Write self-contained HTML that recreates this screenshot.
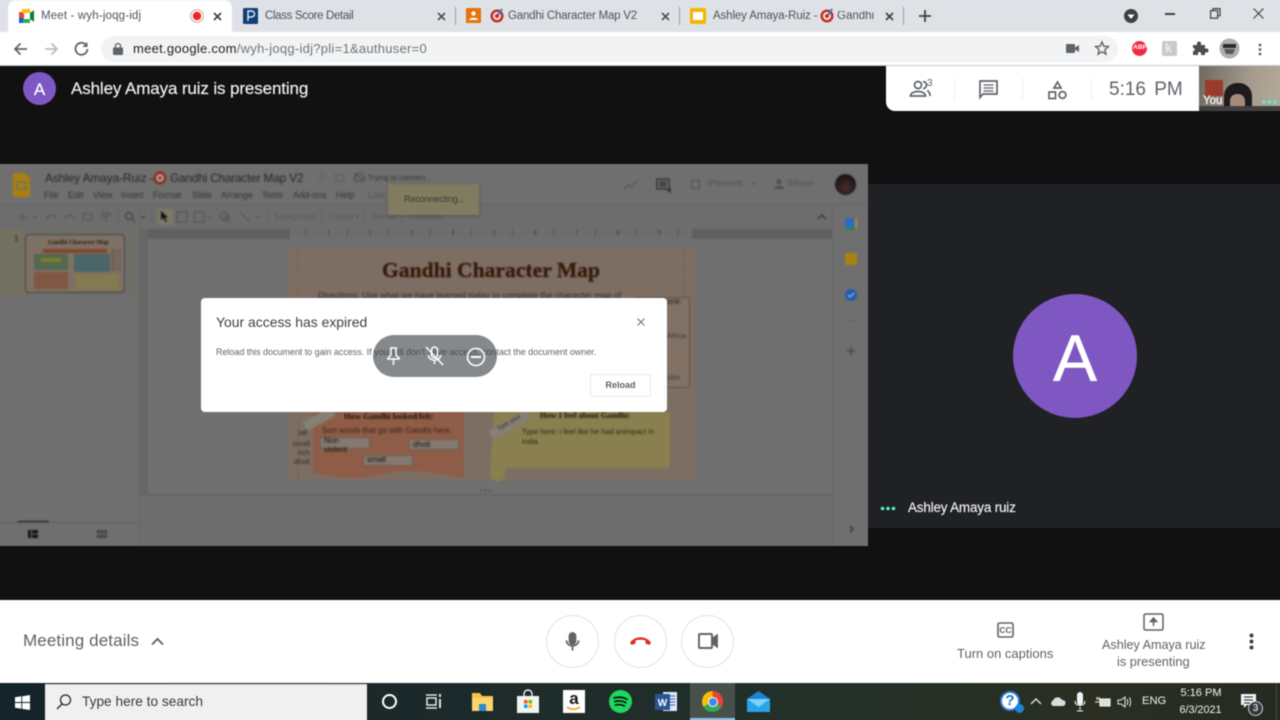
<!DOCTYPE html>
<html><head><meta charset="utf-8"><title>Meet - wyh-joqg-idj</title>
<style>
*{box-sizing:border-box}
html,body{margin:0;padding:0;width:1280px;height:720px;max-height:720px;overflow:hidden;background:#111;font-family:"Liberation Sans",sans-serif}
.a{position:absolute}
.t{position:absolute;white-space:nowrap;line-height:1}
svg{position:absolute;overflow:visible}
</style></head><body>
<div style="position:absolute;left:0;top:0;width:1280px;height:720px;overflow:hidden;contain:strict">
<div class="a" style="left:0;top:0;width:1280px;height:720px;filter:blur(.45px)">

<!-- Chrome -->
<div class="a" style="left:-10px;top:-10px;width:1300px;height:42px;background:#dee1e6"></div>
<div class="a" style="left:8px;top:0;width:224px;height:33px;background:#fff;border-radius:8px 8px 0 0"></div>
<div class="a" style="left:-10px;top:32px;width:1300px;height:33px;background:#fff"></div>
<div class="a" style="left:-10px;top:65px;width:1300px;height:1px;background:#c4c6c9"></div>
<svg style="left:19px;top:9px" width="16" height="14" viewBox="0 0 16 14"><rect x="0" y="3" width="5" height="8" fill="#ea4335"/><rect x="3" y="0" width="8" height="4" fill="#fbbc04"/><rect x="3" y="10" width="8" height="4" fill="#34a853"/><rect x="5" y="4" width="6" height="6" fill="#fff"/><path d="M11 4l4-3v12l-4-3z" fill="#00832d"/><rect x="0" y="9" width="4" height="5" fill="#0066da"/></svg>
<div class="t" style="left:41px;top:11px;font-size:11.500px;color:#50545a;letter-spacing:.16px">Meet - wyh-joqg-idj</div>
<svg style="left:190px;top:9px" width="14" height="14"><circle cx="7" cy="7" r="6.300" fill="none" stroke="#e8a7a3" stroke-width="1.200"/><circle cx="7" cy="7" r="4.200" fill="#e52b20"/></svg>
<svg style="left:213px;top:12px" width="9" height="9"><path d="M1 1l7 7M8 1l-7 7" stroke="#3c4043" stroke-width="1.700"/></svg>

<svg style="left:243px;top:8px" width="15" height="16"><rect width="15" height="16" rx="1" fill="#123f78"/><path d="M5 13V3h3.500a3 3 0 0 1 0 6H5" fill="none" stroke="#dfe8f2" stroke-width="1.400"/></svg>
<div class="t" style="left:265px;top:11px;font-size:11.500px;color:#50545a;letter-spacing:-.35px">Class Score Detail</div>
<svg style="left:437px;top:12px" width="9" height="9"><path d="M1 1l7 7M8 1l-7 7" stroke="#4d5054" stroke-width="1.600"/></svg>
<div class="a" style="left:455px;top:7px;width:1px;height:18px;background:#9da0a5"></div>
<svg style="left:466px;top:8px" width="15" height="15"><rect width="15" height="15" rx="1" fill="#e8710a"/><circle cx="7.500" cy="5.500" r="2.200" fill="#fff"/><path d="M3 12c0-3 9-3 9 0z" fill="#fff"/></svg>
<svg style="left:490px;top:8px" width="14" height="15"><circle cx="7" cy="8" r="6.500" fill="#c62c22"/><circle cx="7" cy="8" r="4" fill="#f2e9df"/><circle cx="7" cy="8" r="2" fill="#c62c22"/><path d="M8 7l4-6" stroke="#2b79c9" stroke-width="2"/></svg>
<div class="t" style="left:508px;top:11px;font-size:11.500px;color:#50545a;letter-spacing:-.2px">Gandhi Character Map V2</div>
<svg style="left:661px;top:12px" width="9" height="9"><path d="M1 1l7 7M8 1l-7 7" stroke="#4d5054" stroke-width="1.600"/></svg>
<div class="a" style="left:679px;top:7px;width:1px;height:18px;background:#9da0a5"></div>
<svg style="left:690px;top:8px" width="16" height="16"><rect width="16" height="16" rx="2" fill="#f4b400"/><rect x="3" y="4" width="10" height="8" fill="#fff"/></svg>
<div class="t" style="left:713px;top:11px;font-size:11.500px;color:#50545a;letter-spacing:-.12px">Ashley Amaya-Ruiz -</div>
<svg style="left:820px;top:8px" width="14" height="15"><circle cx="7" cy="8" r="6.500" fill="#c62c22"/><circle cx="7" cy="8" r="4" fill="#f2e9df"/><circle cx="7" cy="8" r="2" fill="#c62c22"/><path d="M8 7l4-6" stroke="#2b79c9" stroke-width="2"/></svg>
<div class="t" style="left:837px;top:11px;width:38px;overflow:hidden;font-size:11.500px;color:#50545a">Gandhi</div>
<svg style="left:885px;top:12px" width="9" height="9"><path d="M1 1l7 7M8 1l-7 7" stroke="#3c4043" stroke-width="1.700"/></svg>
<div class="a" style="left:903px;top:7px;width:1px;height:18px;background:#9da0a5"></div>
<svg style="left:919px;top:10px" width="12" height="12"><path d="M6 0v12M0 6h12" stroke="#3c4043" stroke-width="1.800"/></svg>
<svg style="left:1124px;top:9px" width="14" height="14"><circle cx="7" cy="7" r="7" fill="#3c4043"/><path d="M3.500 5.500h7L7 10z" fill="#fff"/></svg>
<div class="a" style="left:1165px;top:13px;width:10px;height:1.500px;background:#3c4043"></div>
<svg style="left:1210px;top:8px" width="11" height="11" fill="none" stroke="#3c4043" stroke-width="1.200"><rect x=".6" y="2.600" width="7" height="7.600"/><path d="M3 2.400V.6h7v7.200H8"/></svg>
<svg style="left:1253px;top:8px" width="11" height="11"><path d="M.5.500l10 10M10.500.500l-10 10" stroke="#3c4043" stroke-width="1.100"/></svg>

<!-- toolbar -->
<svg style="left:13px;top:42px" width="15" height="14" fill="none" stroke="#5f6368" stroke-width="1.800"><path d="M14 7H2M7.500 1.500L2 7l5.500 5.500"/></svg>
<svg style="left:44px;top:42px" width="15" height="14" fill="none" stroke="#b9bcc0" stroke-width="1.800"><path d="M1 7h12M7.500 1.500L13 7l-5.500 5.500"/></svg>
<svg style="left:74px;top:41px" width="15" height="15" fill="none" stroke="#5f6368" stroke-width="1.800"><path d="M12.500 4.500A6 6 0 1 0 13.500 8"/><path d="M13.500 1v5h-5" fill="#5f6368" stroke="none"/></svg>
<div class="a" style="left:101px;top:36px;width:1017px;height:26px;border-radius:13px;background:#f1f3f4"></div>
<svg style="left:113px;top:43px" width="10" height="12"><rect y="4.500" width="10" height="7.500" rx="1" fill="#5f6368"/><path d="M2.500 5V3a2.500 2.500 0 0 1 5 0v2" fill="none" stroke="#5f6368" stroke-width="1.300"/></svg>
<div class="t" style="left:133px;top:42px;font-size:13px;letter-spacing:.27px;color:#70757a"><span style="color:#202124">meet.google.com</span>/wyh-joqg-idj?pli=1&amp;authuser=0</div>
<svg style="left:1066px;top:44px" width="13" height="9"><rect width="9" height="9" rx="1" fill="#5f6368"/><path d="M9 3.500L13 1v7L9 5.500z" fill="#5f6368"/></svg>
<svg style="left:1095px;top:41px" width="14" height="14"><path d="M7 1l1.800 4.200 4.600.4-3.500 3 1 4.500L7 10.700 3.100 13.100l1-4.500-3.500-3 4.600-.4z" fill="none" stroke="#5f6368" stroke-width="1.400"/></svg>
<div class="a" style="left:1132px;top:41px;width:15px;height:15px;border-radius:50%;background:#ef2b45"></div>
<div class="t" style="left:1133px;top:45px;font-size:6.500px;font-weight:bold;color:#fff;width:14px;text-align:center">ABP</div>
<div class="a" style="left:1162px;top:41px;width:15px;height:15px;border-radius:2px;background:#c9cacb"></div>
<div class="t" style="left:1165px;top:42px;font-size:12px;font-weight:bold;color:#eee">k</div>
<svg style="left:1193px;top:41px" width="14" height="14"><path d="M0 4h4V2.500a2 2 0 0 1 4 0V4h4v3.500h1.500a2 2 0 0 1 0 4H12V14H8v-1.500a1.500 1.500 0 0 0-3 0V14H0v-4h1a2 2 0 0 0 0-3H0z" fill="#4a4d51"/></svg>
<svg style="left:1219px;top:38px" width="21" height="21"><circle cx="10.500" cy="10.500" r="10" fill="#aeb0a7"/><rect x="4" y="6" width="13" height="4" fill="#2c2d2e"/><path d="M5 11h11l-2 5H7z" fill="#55575a"/></svg>
<svg style="left:1258px;top:43px" width="4" height="14"><circle cx="2" cy="2" r="1.400" fill="#5f6368"/><circle cx="2" cy="6.500" r="1.400" fill="#5f6368"/><circle cx="2" cy="11" r="1.400" fill="#5f6368"/></svg>

<!-- Meet top -->
<div class="a" style="left:-10px;top:66px;width:1300px;height:534px;background:#111112"></div>
<div class="a" style="left:23px;top:72px;width:33px;height:33px;border-radius:50%;background:#7e57c2"></div>
<div class="t" style="left:23px;top:81px;width:33px;text-align:center;font-size:17px;color:#fff;-webkit-text-stroke:.2px #fff">A</div>
<div class="t" style="left:71px;top:80px;font-size:17px;color:#eceded;-webkit-text-stroke:.2px #eceded;letter-spacing:-.12px">Ashley Amaya ruiz is presenting</div>

<div class="a" style="left:886px;top:66px;width:314px;height:45px;background:#fff;border-radius:0 0 0 9px"></div>
<svg style="left:909px;top:79px" width="25" height="19" fill="none" stroke="#5f6368" stroke-width="1.700"><circle cx="9" cy="6" r="3.500"/><path d="M1.500 17c0-6 15-6 15 0z"/><path d="M14 2.500a3.500 3.500 0 0 1 0 7M18 11.500c2 .8 3 2.500 3 5.500"/></svg>
<div class="t" style="left:927px;top:79px;font-size:10px;color:#5f6368">3</div>
<div class="a" style="left:954px;top:78px;width:1px;height:22px;background:#eceef0"></div>
<svg style="left:979px;top:80px" width="19" height="19" fill="none" stroke="#5f6368" stroke-width="1.700"><path d="M1 1h17v13H4l-3 3.500z"/><path d="M4.500 5h10M4.500 8h10M4.500 11h10" stroke-width="1.300"/></svg>
<div class="a" style="left:1022px;top:78px;width:1px;height:22px;background:#eceef0"></div>
<svg style="left:1048px;top:81px" width="19" height="18" fill="none" stroke="#5f6368" stroke-width="1.700"><path d="M9.500 1l3.500 6H6z"/><rect x="1" y="11" width="6.500" height="6.500"/><circle cx="14.500" cy="14" r="3.400"/></svg>
<div class="a" style="left:1091px;top:78px;width:1px;height:22px;background:#eceef0"></div>
<div class="t" style="left:1109px;top:80px;font-size:19px;color:#5f6368;word-spacing:3px">5:16 PM</div>

<div class="a" style="left:1199px;top:66px;width:91px;height:45px;overflow:hidden;background:#8a8377">
  <div class="a" style="left:0;top:0;width:91px;height:45px;background:linear-gradient(100deg,#6f6860,#a59c8e 55%,#b7ae9f)"></div>
  <div class="a" style="left:6px;top:14px;width:18px;height:16px;background:#9a3a2a"></div>
  <div class="a" style="left:25px;top:17px;width:28px;height:40px;border-radius:13px 13px 0 0;background:#1e1b1d"></div>
  <div class="a" style="left:31px;top:28px;width:15px;height:20px;border-radius:7px;background:#a98a78"></div>
  <div class="a" style="left:0;top:40px;width:91px;height:5px;background:#423f41"></div>
</div>
<div class="t" style="left:1203px;top:96px;font-size:11.500px;color:#fff;-webkit-text-stroke:.2px #fff">You</div>
<svg style="left:1262px;top:100px" width="16" height="4"><circle cx="2" cy="2" r="1.700" fill="#5eecd0"/><circle cx="7.500" cy="2" r="1.700" fill="#5eecd0"/><circle cx="13" cy="2" r="1.700" fill="#5eecd0"/></svg>

<!-- Tile right -->
<div class="a" style="left:868px;top:184px;width:422px;height:344px;background:#202124"></div>
<div class="a" style="left:1013px;top:294px;width:124px;height:124px;border-radius:50%;background:#7e57c2"></div>
<div class="t" style="left:1013px;top:325px;width:124px;text-align:center;font-size:66px;color:#fff;-webkit-text-stroke:.4px #fff">A</div>
<svg style="left:880px;top:506px" width="16" height="5"><circle cx="2.500" cy="2.500" r="1.800" fill="#5eecd0"/><circle cx="8" cy="2.500" r="1.800" fill="#5eecd0"/><circle cx="13.500" cy="2.500" r="1.800" fill="#5eecd0"/></svg>
<div class="t" style="left:908px;top:501px;font-size:13.500px;color:#f1f3f4;-webkit-text-stroke:.15px #f1f3f4;letter-spacing:-.2px">Ashley Amaya ruiz</div>

<!-- Slides app (dimmed) -->
<div class="a" style="left:-10px;top:164px;width:12px;height:382px;background:#6f6f70"></div>
<div class="a" style="left:0;top:164px;width:868px;height:382px;background:#707071;overflow:hidden">
  <div style="position:absolute;left:-10px;top:-10px;width:888px;height:402px;filter:blur(.7px)">
  <div style="position:absolute;left:10px;top:10px;width:868px;height:382px">
  <div class="a" style="left:-10px;top:-10px;width:888px;height:50px;background:#6f6f70"></div>
  <div class="a" style="left:0;top:40px;width:868px;height:1px;background:#656566"></div>
  <div class="a" style="left:0;top:41px;width:832px;height:24px;background:#6d6d6e"></div>
  <svg style="left:13px;top:9px" width="17" height="24"><path d="M0 2a2 2 0 0 1 2-2h10l5 5v17a2 2 0 0 1-2 2H2a2 2 0 0 1-2-2z" fill="#a97f0f"/><rect x="4" y="9" width="9" height="7" fill="none" stroke="#6f6f70" stroke-width="1.500"/></svg>
  <div class="t" style="left:45px;top:9px;font-size:11.800px;color:#252525;letter-spacing:-.05px">Ashley Amaya-Ruiz -</div>
  <svg style="left:153px;top:7px" width="14" height="14"><circle cx="7" cy="7" r="6.500" fill="#8c2b20"/><circle cx="7" cy="7" r="3.800" fill="#bfb2a6"/><circle cx="7" cy="7" r="1.800" fill="#8c2b20"/></svg>
  <div class="t" style="left:170px;top:9px;font-size:11.800px;color:#252525;letter-spacing:-.16px">Gandhi Character Map V2</div>
  <div class="t" style="left:316px;top:8px;font-size:11px;color:#5a5a5b">☆</div>
  <div class="a" style="left:335px;top:10px;width:9px;height:8px;border:1px solid #5a5a5b"></div>
  <svg style="left:353px;top:8px" width="12" height="10" fill="none" stroke="#454546"><path d="M3 9h7a2 2 0 0 0 0-4 3.500 3.500 0 0 0-7-.500A2.300 2.300 0 0 0 3 9zM1 1l10 8"/></svg>
  <div class="t" style="left:368px;top:10px;font-size:7.500px;color:#303031">Trying to connect...</div>
  <div class="t" style="left:44px;top:27px;font-size:9px;color:#343435">File</div>
  <div class="t" style="left:68px;top:27px;font-size:9px;color:#343435">Edit</div>
  <div class="t" style="left:93px;top:27px;font-size:9px;color:#343435">View</div>
  <div class="t" style="left:121px;top:27px;font-size:9px;color:#343435">Insert</div>
  <div class="t" style="left:153px;top:27px;font-size:9px;color:#343435">Format</div>
  <div class="t" style="left:192px;top:27px;font-size:9px;color:#343435">Slide</div>
  <div class="t" style="left:221px;top:27px;font-size:9px;color:#343435">Arrange</div>
  <div class="t" style="left:262px;top:27px;font-size:9px;color:#343435">Tools</div>
  <div class="t" style="left:293px;top:27px;font-size:9px;color:#343435">Add-ons</div>
  <div class="t" style="left:336px;top:27px;font-size:9px;color:#343435">Help</div>
  <div class="t" style="left:368px;top:27px;font-size:9px;color:#555556">Last</div>
  <!-- toolbar icons -->
  <svg style="left:0;top:46px" width="300" height="14" fill="none" stroke="#565657" stroke-width="1.200"><path d="M18 7h8M22 3v8M33 6l2 2 2-2M47 9c1-5 7-5 9 0M65 9c2-5 8-5 9 0"/><rect x="83" y="4" width="9" height="6"/><path d="M102 3h8v3h-8zM106 6v6"/><circle cx="129" cy="6" r="3.500" stroke="#424243"/><path d="M132 9l3 3M141 6l2 2 2-2" stroke="#424243"/><rect x="177" y="2" width="10" height="10"/><rect x="194" y="2" width="10" height="10"/><path d="M207 6l2 2 2-2"/><circle cx="224" cy="6" r="4"/><rect x="224" y="6" width="5" height="5"/><path d="M240 2l10 10M256 6l2 2 2-2"/></svg>
  <div class="a" style="left:157px;top:45px;width:16px;height:16px;background:#7c7866"></div>
  <svg style="left:161px;top:47px" width="8" height="11"><path d="M0 0l7 6.500H4l2 4-1.500.5-2-4L0 9z" fill="#111"/></svg>
  <div class="a" style="left:117px;top:46px;width:1px;height:14px;background:#626263"></div>
  <div class="a" style="left:151px;top:46px;width:1px;height:14px;background:#626263"></div>
  <div class="a" style="left:267px;top:46px;width:1px;height:14px;background:#626263"></div>
  <div class="a" style="left:321px;top:46px;width:1px;height:14px;background:#626263"></div>
  <div class="a" style="left:364px;top:46px;width:1px;height:14px;background:#626263"></div>
  <div class="a" style="left:401px;top:46px;width:1px;height:14px;background:#626263"></div>
  <div class="t" style="left:274px;top:49px;font-size:8px;color:#5a5a5b">Background</div>
  <div class="t" style="left:329px;top:49px;font-size:8px;color:#5a5a5b">Layout ▾</div>
  <div class="t" style="left:371px;top:49px;font-size:8px;color:#5a5a5b">Theme</div>
  <div class="t" style="left:408px;top:49px;font-size:8px;color:#5a5a5b">Transition</div>
  <svg style="left:817px;top:50px" width="10" height="6"><path d="M1 5l4-4 4 4" fill="none" stroke="#3a3a3b" stroke-width="1.400"/></svg>
  <!-- header right -->
  <svg style="left:624px;top:16px" width="14" height="10" fill="none" stroke="#565657" stroke-width="1.300"><path d="M0 9l4-4 3 2 6-6"/></svg>
  <svg style="left:656px;top:14px" width="14" height="14" fill="none" stroke="#2a2a2b" stroke-width="1.300"><path d="M1 1h12v9.500h1V14l-3-3H1zM3.500 4h7M3.500 6h7M3.500 8h7"/></svg>
  <div class="a" style="left:691px;top:16px;width:9px;height:9px;border:1px solid #4f4f50"></div>
  <div class="t" style="left:708px;top:15px;font-size:9.500px;color:#5a5a5b;font-weight:bold">Present</div>
  <div class="t" style="left:752px;top:17px;font-size:7px;color:#5a5a5b">▾</div>
  <svg style="left:774px;top:15px" width="10" height="10" fill="#4f4f50"><circle cx="5" cy="2.800" r="2.500"/><path d="M0 10c0-4 10-4 10 0z"/></svg>
  <div class="t" style="left:787px;top:15px;font-size:9.500px;color:#5a5a5b;font-weight:bold">Share</div>
  <div class="a" style="left:835px;top:10px;width:21px;height:21px;border-radius:50%;background:radial-gradient(circle at 50% 65%,#4a2c2c,#1b1415 70%)"></div>

  <!-- filmstrip -->
  <div class="a" style="left:-10px;top:65px;width:149px;height:327px;background:#6f6f70"></div>
  <div class="a" style="left:-10px;top:65px;width:35px;height:67px;background:#73715f"></div>
  <div class="a" style="left:25px;top:65px;width:114px;height:67px;background:#6f6f69"></div>
  <div class="a" style="left:139px;top:41px;width:1px;height:351px;background:#636364"></div>
  <div class="a" style="left:140px;top:65px;width:8px;height:265px;background:#666667"></div>
  <div class="t" style="left:14px;top:70px;font-size:8.500px;color:#2a2a2b">1</div>
  <div class="a" style="left:25px;top:70px;width:100px;height:59px;border:1.500px solid #404245;border-radius:4px;background:#7d7064;overflow:hidden">
    <div class="t" style="left:22px;top:5px;font-size:6px;font-family:'Liberation Serif',serif;font-weight:bold;color:#2e1a0e">Gandhi Character Map</div>
    <div class="a" style="left:17px;top:14px;width:64px;height:4px;background:#83452f"></div>
    <div class="a" style="left:8px;top:19px;width:34px;height:16px;border-radius:2px;background:#54684f"></div>
    <div class="a" style="left:15px;top:23px;width:20px;height:4px;background:#7a7f26"></div>
    <div class="a" style="left:48px;top:19px;width:36px;height:18px;border-radius:2px;background:#4a6668"></div>
    <div class="a" style="left:8px;top:37px;width:34px;height:17px;background:#815643"></div>
    <div class="a" style="left:50px;top:39px;width:43px;height:16px;background:#85794f"></div>
    <div class="a" style="left:86px;top:14px;width:10px;height:22px;background:#75685d;border-left:1px solid #5d534c"></div>
  </div>
  <div class="a" style="left:18px;top:357px;width:31px;height:2px;background:#111"></div>
  <div class="a" style="left:0;top:358px;width:139px;height:1px;background:#5f5f60"></div>
  <svg style="left:28px;top:366px" width="10" height="8" fill="#111"><rect width="3" height="8"/><rect x="4" width="6" height="3.500"/><rect x="4" y="4.500" width="6" height="3.500"/></svg>
  <svg style="left:97px;top:366px" width="10" height="8" fill="#3f3f40"><rect width="2.800" height="3.500"/><rect x="3.600" width="2.800" height="3.500"/><rect x="7.200" width="2.800" height="3.500"/><rect y="4.500" width="2.800" height="3.500"/><rect x="3.600" y="4.500" width="2.800" height="3.500"/><rect x="7.200" y="4.500" width="2.800" height="3.500"/></svg>

  <!-- canvas -->
  <div class="a" style="left:148px;top:65px;width:684px;height:10px;background:#5f6062"></div>
  <div class="a" style="left:290px;top:65px;width:402px;height:10px;background:#6d6e70"></div>
  <div class="t" style="left:287px;top:66px;font-size:7px;color:#3e3e3f;letter-spacing:.1px">· · · · | · · · · 1 · · · | · · · · 2 · · · | · · · · 3 · · · | · · · · 4 · · · | · · · · 5 · · · | · · · · 6 · · · | · · · · 7 · · · | · · · · 8 · · · | · · · · 9 · · · | · · ·</div>
  <div class="a" style="left:140px;top:330px;width:692px;height:1px;background:#616162"></div>
  <div class="a" style="left:140px;top:331px;width:692px;height:61px;background:#6d6d6e"></div>
  <div class="t" style="left:480px;top:324px;font-size:7px;color:#4b4b4c">• • •</div>

  <!-- slide -->
  <div class="a" style="left:287px;top:85px;width:408px;height:232px;background:#7d6e63;overflow:hidden">
    <div class="a" style="left:0;top:0;width:12px;height:232px;border-right:1px dashed #66564c;opacity:.6"></div>
    <div class="a" style="right:0;top:0;width:12px;height:60px;border-left:1px dashed #66564c;opacity:.6"></div>
    <div class="t" style="left:0;top:11px;width:408px;text-align:center;font-family:'Liberation Serif',serif;font-weight:bold;font-size:21.500px;letter-spacing:.05px;color:#351a0a;-webkit-text-stroke:.4px #351a0a">Gandhi Character Map</div>
    <div class="t" style="left:31px;top:42px;font-size:8.600px;color:#332a25;letter-spacing:.1px"><span>Directions:</span> Use what we have learned today to complete the character map of</div>
    <div class="a" style="left:348px;top:48px;width:55px;height:91px;background:#827266;border:1px solid #5e5046"></div>
  </div>
  <div class="t" style="left:667px;top:134px;font-size:8px;color:#2a2420">ank:</div>
  <div class="t" style="left:667px;top:168px;font-size:7.500px;color:#3a3430">Africa</div>
  <div class="t" style="left:667px;top:210px;font-size:7.500px;color:#3a3430">slim</div>
  <!-- lower slide pieces -->
  <svg style="left:313px;top:248px" width="152" height="70"><path d="M0 0H151V66C120 60 95 56 70 62 45 68 20 66 0 60z" fill="#8f5c47"/></svg>
  <svg style="left:490px;top:248px" width="182" height="70"><path d="M4 0H180V52a4 4 0 0 1-4 4H15V62a7 7 0 0 1-15 0z" fill="#8a7f4e"/></svg>
  <div class="t" style="left:344px;top:248px;font-family:'Liberation Serif',serif;font-size:8.500px;font-weight:bold;color:#20120b">How Gandhi looked/felt:</div>
  <div class="t" style="left:540px;top:248px;font-family:'Liberation Serif',serif;font-size:8.300px;font-weight:bold;color:#20120b">How I feel about Gandhi:</div>
  <div class="t" style="left:322px;top:263px;font-size:8px;color:#3a1e13">Sort words that go with Gandhi here.</div>
  <div class="t" style="left:522px;top:264px;font-size:7.500px;color:#2d2712">Type here: i feel like he had animpact in</div>
  <div class="t" style="left:522px;top:274px;font-size:7.500px;color:#2d2712">india</div>
  <div class="a" style="left:320px;top:273px;width:50px;height:12px;background:#85796f;border:1px solid #6c5e54"></div>
  <div class="t" style="left:324px;top:272px;font-size:8px;line-height:9px;color:#111;white-space:normal;width:36px">Non violent</div>
  <div class="a" style="left:409px;top:275px;width:50px;height:11px;background:#85796f;border:1px solid #6c5e54"></div>
  <div class="t" style="left:413px;top:277px;font-size:8px;color:#111">dhoti</div>
  <div class="a" style="left:363px;top:291px;width:50px;height:11px;background:#85796f;border:1px solid #6c5e54"></div>
  <div class="t" style="left:367px;top:292px;font-size:8px;color:#111">small</div>
  <div class="t" style="left:298px;top:265px;font-size:7.500px;color:#2f2a26">tall</div>
  <div class="t" style="left:292px;top:275px;font-size:7.500px;line-height:9px;color:#2f2a26;text-align:right;white-space:normal;width:18px">small rich dhoti</div>
  <div class="a" style="left:303px;top:250px;width:32px;height:10px;background:#857f74;transform:rotate(-28deg)"></div>
  <div class="a" style="left:488px;top:255px;width:44px;height:11px;background:#857f74;transform:rotate(-30deg)"></div>
  <div class="t" style="left:496px;top:256px;font-size:6px;color:#2a2a2a;transform:rotate(-30deg)">Type your</div>

  <!-- right panel -->
  <div class="a" style="left:832px;top:41px;width:46px;height:351px;background:#6f6f70;border-left:1px solid #646465"></div>
  <div class="a" style="left:845px;top:54px;width:12px;height:12px;border-radius:2px;background:#2e6cc0;border-bottom:2px solid #2a8a40;border-right:2px solid #b99115"></div>
  <div class="a" style="left:845px;top:89px;width:12px;height:12px;border-radius:2px;background:#a9830d"></div>
  <div class="a" style="left:845px;top:125px;width:12px;height:12px;border-radius:50%;background:#225aae"></div>
  <svg style="left:847px;top:128px" width="8" height="6"><path d="M1 3l2 2 4-4" fill="none" stroke="#9fb6d8" stroke-width="1.300"/></svg>
  <div class="a" style="left:845px;top:156px;width:12px;height:1px;background:#626263"></div>
  <svg style="left:847px;top:183px" width="8" height="8"><path d="M4 0v8M0 4h8" stroke="#3f3f40" stroke-width="1.200"/></svg>
  <svg style="left:849px;top:361px" width="5" height="8"><path d="M1 1l3 3-3 3" fill="none" stroke="#2f2f30" stroke-width="1.300"/></svg>
  </div>
  </div>
  <div class="a" style="left:388px;top:20px;width:91px;height:31px;background:#7f7c60;box-shadow:0 1px 3px rgba(0,0,0,.25);filter:blur(.4px)"></div>
  <div class="t" style="left:404px;top:31px;font-size:8.800px;color:#3a3a30">Reconnecting...</div>
</div>

<!-- Dialog -->
<div class="a" style="left:201px;top:298px;width:466px;height:114px;background:#fff;border-radius:4px"></div>
<div class="t" style="left:216px;top:316px;font-size:13.900px;color:#3c4043;letter-spacing:.02px">Your access has expired</div>
<svg style="left:637px;top:318px" width="8" height="8"><path d="M.5.500l7 7M7.500.500l-7 7" stroke="#6f7377" stroke-width="1.100"/></svg>
<div class="t" style="left:216px;top:348px;font-size:9px;letter-spacing:-.04px;color:#5f6368">Reload this document to gain access. If you still don't have access, contact the document owner.</div>
<div class="a" style="left:590px;top:374px;width:61px;height:23px;border:1px solid #e8eaed;border-radius:2px;background:#fff"></div>
<div class="t" style="left:590px;top:381px;width:61px;text-align:center;font-size:9px;font-weight:bold;color:#5f6368">Reload</div>

<!-- Pill overlay -->
<div class="a" style="left:373px;top:335px;width:124px;height:42px;border-radius:21px;background:rgba(60,64,67,.62)"></div>
<svg style="left:385px;top:347px" width="17" height="19" fill="none" stroke="#fff" stroke-width="1.500"><path d="M5 1h7M6 1v7l-3 3v1h11v-1l-3-3V1M8.500 12v6"/></svg>
<svg style="left:425px;top:346px" width="19" height="20" fill="none" stroke="#fff" stroke-width="1.500"><rect x="6.500" y="1" width="6" height="11" rx="3"/><path d="M3.500 9c0 7 12 7 12 0M9.500 15v3M1 1l17 18"/></svg>
<svg style="left:466px;top:347px" width="20" height="20" fill="none" stroke="#fff" stroke-width="1.600"><circle cx="10" cy="10" r="8.500"/><path d="M5 10h10" stroke-width="2"/></svg>

<!-- Bottom bar -->
<div class="a" style="left:-10px;top:600px;width:1300px;height:83px;background:#fff"></div>
<div class="t" style="left:23px;top:632px;font-size:17px;color:#5f6368;letter-spacing:.12px">Meeting details</div>
<svg style="left:151px;top:637px" width="13" height="9"><path d="M1 7.500l5.500-5.500L12 7.500" fill="none" stroke="#5f6368" stroke-width="1.900"/></svg>
<div class="a" style="left:546px;top:615px;width:53px;height:53px;border-radius:50%;border:1px solid #e0e2e4"></div>
<div class="a" style="left:614px;top:615px;width:53px;height:53px;border-radius:50%;border:1px solid #e0e2e4"></div>
<div class="a" style="left:681px;top:615px;width:53px;height:53px;border-radius:50%;border:1px solid #e0e2e4"></div>
<svg style="left:565px;top:632px" width="15" height="19" fill="none" stroke="#5f6368" stroke-width="1.800"><rect x="4.500" y="1" width="6" height="11" rx="3" fill="#5f6368"/><path d="M1.500 8.500c0 7 12 7 12 0M7.500 14.500v4"/></svg>
<svg style="left:629px;top:636px" width="23" height="10"><path d="M1 6.500C6-.5 17-.5 22 6.500l-1.500 2.500-4-1.500V4.500c-3-1-7-1-10 0v3l-4 1.500z" fill="#d93025"/></svg>
<svg style="left:698px;top:633px" width="20" height="16" fill="none" stroke="#5f6368" stroke-width="1.900"><rect x="1" y="1" width="13" height="14" rx="1"/><path d="M14 6l5-3.500v11L14 10z" fill="#5f6368"/></svg>

<svg style="left:997px;top:622px" width="17" height="16"><rect x="1" y="1" width="15" height="14" rx="1.500" fill="none" stroke="#5f6368" stroke-width="1.600"/><text x="8.500" y="11" text-anchor="middle" font-size="8.500" font-weight="bold" fill="#5f6368" font-family="Liberation Sans">CC</text></svg>
<div class="t" style="left:957px;top:647px;font-size:13px;color:#5f6368">Turn on captions</div>
<svg style="left:1143px;top:613px" width="21" height="18" fill="none" stroke="#5f6368" stroke-width="1.500"><rect x="1" y="1" width="19" height="16" rx="1.500"/><path d="M10.500 13V8M7.500 8.500l3-3.500 3 3.500z" fill="#5f6368"/></svg>
<div class="t" style="left:1102px;top:639px;font-size:12.600px;color:#5f6368">Ashley Amaya ruiz</div>
<div class="t" style="left:1117px;top:656px;font-size:12.800px;color:#5f6368">is presenting</div>
<svg style="left:1249px;top:633px" width="5" height="17" fill="#3c4043"><circle cx="2.500" cy="2.500" r="2"/><circle cx="2.500" cy="8.500" r="2"/><circle cx="2.500" cy="14.500" r="2"/></svg>

<!-- Taskbar -->
<div class="a" style="left:-10px;top:683px;width:1300px;height:47px;background:linear-gradient(90deg,#14242b 0,#1d2a2b 35%,#22302a 60%,#2a2f22 85%,#262b22 100%)"></div>
<svg style="left:15px;top:695px" width="15" height="15" fill="#fff"><path d="M0 2.200L6.300 1.300V7H0zM7.200 1.200L15 0v7H7.200zM0 8h6.300v5.700L0 12.800zM7.200 8H15v7l-7.800-1.100z"/></svg>
<div class="a" style="left:45px;top:684px;width:322px;height:46px;background:#f0f0f0;border-top:1px solid #d4d4d4"></div>
<svg style="left:56px;top:694px" width="16" height="16" fill="none" stroke="#2a2a2a" stroke-width="1.300"><circle cx="9.500" cy="6" r="5"/><path d="M6 10L1 15"/></svg>
<div class="t" style="left:82px;top:695px;font-size:13.700px;color:#3a3a3a">Type here to search</div>
<div class="a" style="left:382px;top:694px;width:15px;height:15px;border-radius:50%;border:2px solid #fff"></div>
<svg style="left:426px;top:694px" width="17" height="15" fill="none" stroke="#fff" stroke-width="1.300"><path d="M0 1h11M0 14h11"/><rect x="1" y="4" width="9" height="7"/><path d="M14 0v3M14 5v9" stroke-width="1.700"/></svg>
<svg style="left:472px;top:692px" width="21" height="19"><path d="M0 1h8l2 3h11v15H0z" fill="#f6c344"/><rect x="0" y="6" width="21" height="13" fill="#fbd568"/><rect x="7" y="12" width="7" height="7" fill="#2a8bd1"/></svg>
<svg style="left:517px;top:690px" width="22" height="23"><path d="M7 6V4a4 4 0 0 1 8 0v2" fill="none" stroke="#f2f2f2" stroke-width="1.400"/><rect y="6" width="22" height="17" fill="#f3f3f3"/><rect x="7" y="10" width="3.500" height="3.500" fill="#f25022"/><rect x="11.500" y="10" width="3.500" height="3.500" fill="#7fba00"/><rect x="7" y="14.500" width="3.500" height="3.500" fill="#00a4ef"/><rect x="11.500" y="14.500" width="3.500" height="3.500" fill="#ffb900"/></svg>
<div class="a" style="left:563px;top:690px;width:22px;height:23px;background:#fff"></div>
<div class="t" style="left:563px;top:690px;width:22px;text-align:center;font-size:17px;font-weight:bold;color:#1a1a1a">a</div>
<svg style="left:566px;top:706px" width="16" height="5"><path d="M1 1c4 3 9 3 13 0" fill="none" stroke="#f90" stroke-width="1.500"/></svg>
<svg style="left:609px;top:690px" width="23" height="23"><circle cx="11.500" cy="11.500" r="11.500" fill="#1ed760"/><path d="M5 8c4.500-1.300 9-1 13 1.300M5.800 11.500c4-1 7.500-.8 11 1.200M6.500 15c3-.8 6-.6 9 1" fill="none" stroke="#111" stroke-width="1.700" stroke-linecap="round"/></svg>
<svg style="left:655px;top:691px" width="22" height="21"><rect x="8" y="1" width="14" height="19" fill="#dfe7f4"/><path d="M13 5h7M13 8h7M13 11h7M13 14h7" stroke="#3b66ad"/><rect y="3" width="15" height="16" fill="#2a5599"/><text x="7.500" y="15" text-anchor="middle" font-size="10" font-weight="bold" fill="#fff" font-family="Liberation Sans">W</text></svg>
<div class="a" style="left:690px;top:683px;width:45px;height:37px;background:#47504a"></div>
<div class="a" style="left:690px;top:718px;width:45px;height:4px;background:#8fc1e8"></div>
<div class="a" style="left:702px;top:691px;width:21px;height:21px;border-radius:50%;background:conic-gradient(from 30deg,#ea4335 0 120deg,#34a853 120deg 240deg,#fbbc04 240deg 360deg);transform:rotate(-30deg)"></div>
<div class="a" style="left:707.500px;top:696.500px;width:10px;height:10px;border-radius:50%;background:#4285f4;border:1.500px solid #fff"></div>
<svg style="left:747px;top:691px" width="23" height="21"><path d="M0 8L11.500 0 23 8z" fill="#1d82d2"/><rect y="8" width="23" height="13" fill="#2aa3e8"/><path d="M0 8l11.500 8L23 8" fill="#7cd2f5"/></svg>

<!-- tray -->
<div class="a" style="left:1000px;top:691px;width:20px;height:20px;border-radius:50%;background:#fff;border:2px solid #2a7fd6"></div>
<div class="t" style="left:1000px;top:693px;width:20px;text-align:center;font-size:15px;font-weight:bold;color:#1f6fc4">?</div>
<div class="a" style="left:1015px;top:704px;width:9px;height:9px;border-radius:50%;background:#1f84d8"></div>
<svg style="left:1030px;top:698px" width="12" height="7"><path d="M1 6l5-5 5 5" fill="none" stroke="#fff" stroke-width="1.200"/></svg>
<svg style="left:1050px;top:696px" width="16" height="10"><path d="M3 10a3 3 0 0 1 0-5.500A5 5 0 0 1 12 4a3 3 0 0 1 1 6z" fill="#dcdcdc"/></svg>
<svg style="left:1074px;top:692px" width="12" height="20" fill="#f2f2f2"><rect x="3" y="0" width="6" height="13" rx="3"/><path d="M1 9c0 6 10 6 10 0M6 15v3M3 19h6" fill="none" stroke="#f2f2f2" stroke-width="1.100"/></svg>
<svg style="left:1095px;top:696px" width="16" height="12" fill="none" stroke="#f2f2f2" stroke-width="1.100"><rect x="5" y="3" width="10" height="7" fill="#dcdcdc"/><path d="M0 6h5M2 1v3M4 1v3"/></svg>
<svg style="left:1118px;top:696px" width="15" height="12" fill="none" stroke="#e8e8e8" stroke-width="1"><path d="M0 4h3l4-3v10L3 8H0zM9 3c1 2 1 4 0 6M11.500 1.500c1.500 3 1.500 6 0 9"/></svg>
<div class="t" style="left:1142px;top:696px;font-size:11.200px;color:#f2f2f2">ENG</div>
<div class="t" style="left:1176px;top:688px;width:50px;text-align:center;font-size:11px;color:#f2f2f2">5:16 PM</div>
<div class="t" style="left:1171px;top:705px;width:59px;text-align:center;font-size:10.800px;color:#f2f2f2">6/3/2021</div>
<svg style="left:1241px;top:694px" width="16" height="16"><path d="M0 0h15v11H6l-3 3v-3H0z" fill="#f2f2f2"/><path d="M3 3h9M3 6h9M3 9h6" stroke="#222" stroke-width="1"/></svg>
<div class="a" style="left:1248px;top:701px;width:15px;height:15px;border-radius:50%;background:#33383a;border:1px solid #d0d0d0"></div>
<div class="t" style="left:1248px;top:704px;width:15px;text-align:center;font-size:10px;color:#fff">3</div>
<div class="a" style="left:1276px;top:683px;width:1px;height:37px;background:#45493f"></div>
</div>
</div>
</body></html>
